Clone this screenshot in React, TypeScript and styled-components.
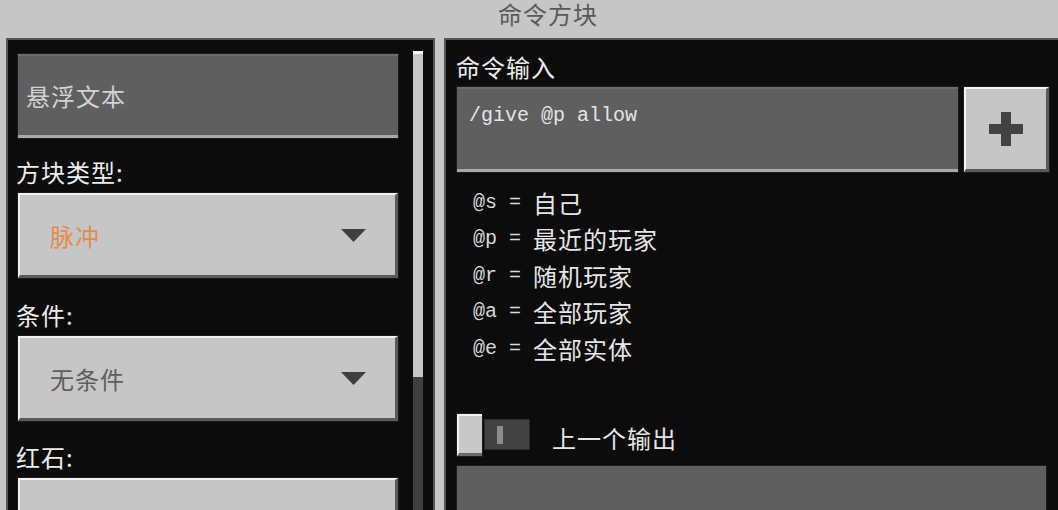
import { createGlobalStyle, styled } from "styled-components";

const GlobalStyle = createGlobalStyle`
  html, body {
    margin: 0;
    padding: 0;
    background: #c6c6c6;
  }
  body {
    font-family: "Noto Sans CJK SC", "Noto Sans", sans-serif;
  }
`;

const Screen = styled.div`
  width: 1058px;
  height: 510px;
  overflow: hidden;
  background: #c6c6c6;
  display: flex;
  flex-direction: column;
`;

const TitleBar = styled.div`
  height: 38px;
  flex: none;
  display: flex;
  justify-content: center;
  padding: 1px 0 0 38px;
  box-sizing: border-box;
`;

const Title = styled.div`
  font-size: 24px;
  line-height: 26px;
  letter-spacing: 1px;
  color: #595959;
`;

const Body = styled.div`
  flex: 1;
  display: flex;
  gap: 9px;
  padding-left: 6px;
  min-height: 0;
`;

const Panel = styled.div`
  background: #0c0c0c;
  border: 2px solid #565656;
  box-sizing: border-box;
  height: 540px;
  flex: none;
`;

const LeftPanel = styled(Panel)`
  width: 429px;
  display: flex;
  padding: 0 10px;
`;

const RightPanel = styled(Panel)`
  flex: 1;
  display: flex;
  flex-direction: column;
  padding: 15px 9px 0 10px;
`;

const Column = styled.div`
  width: 380px;
  margin-top: 14px;
  display: flex;
  flex-direction: column;

  & > * {
    flex-shrink: 0;
  }
`;

const Label = styled.div<{ $h: number }>`
  height: ${(p) => p.$h}px;
  display: flex;
  align-items: flex-end;
  padding-bottom: 9px;
  box-sizing: border-box;
  margin-left: -2px;
  font-size: 24px;
  line-height: 24px;
  letter-spacing: 1px;
  color: #ececec;
`;

const PanelHeading = styled.div`
  font-size: 24px;
  line-height: 24px;
  letter-spacing: 1px;
  color: #ececec;
`;

const TextField = styled.div<{ $h: number }>`
  height: ${(p) => p.$h}px;
  box-sizing: border-box;
  background: #5f5f5f;
  border-top: 2px solid #6c6c6c;
  border-bottom: 3px solid #a9a9a9;
  box-shadow: 0 0 0 1px #1c1c1c;
`;

const HoverField = styled(TextField)`
  display: flex;
  align-items: center;
  padding-left: 8px;
  font-size: 24px;
  letter-spacing: 1px;
  color: #d2d2d2;
`;

const Dropdown = styled.div`
  height: 85px;
  box-sizing: border-box;
  background: #c6c6c6;
  border-top: 2px solid #f2f2f2;
  border-left: 2px solid #f2f2f2;
  border-right: 3px solid #5a5a5a;
  border-bottom: 3px solid #5a5a5a;
  box-shadow: 0 0 0 1px #1c1c1c;
  display: flex;
  align-items: center;
  justify-content: space-between;
  padding: 1px 29px 0 30px;
`;

const DropdownText = styled.span<{ $accent?: boolean }>`
  font-size: 24px;
  letter-spacing: 1px;
  color: ${(p) => (p.$accent ? "#e8894a" : "#5e5e5e")};
`;

const Scrollbar = styled.div`
  width: 10px;
  margin: 11px 0 0 15px;
  background: #3f3f3f;
  display: flex;
  flex-direction: column;
`;

const Thumb = styled.div`
  height: 326px;
  flex: none;
  background: #c6c6c6;
  border-top: 3px solid #f6f6f6;
  box-sizing: border-box;
`;

const CommandRow = styled.div`
  display: flex;
  gap: 6px;
  margin-top: 8px;
  flex: none;
`;

const CommandField = styled(TextField)`
  width: 501px;
  margin-left: 1px;
  padding: 16px 12px;
  font-family: "Liberation Mono", "DejaVu Sans Mono", monospace;
  font-size: 20px;
  line-height: 22px;
  color: #e4e4e4;
`;

const PlusButton = styled.div`
  width: 85px;
  height: 85px;
  box-sizing: border-box;
  background: #c6c6c6;
  border-top: 2px solid #f4f4f4;
  border-left: 2px solid #f4f4f4;
  border-right: 3px solid #5a5a5a;
  border-bottom: 3px solid #5a5a5a;
  box-shadow: 0 0 0 1px #1c1c1c;
  display: flex;
  align-items: center;
  justify-content: center;
`;

const SelectorList = styled.div`
  margin-top: 12px;
  padding-left: 17px;
  display: flex;
  flex-direction: column;
  flex: none;
`;

const SelectorLine = styled.div`
  height: 36.5px;
  display: flex;
  align-items: center;
  color: #e6e6e6;
`;

const Code = styled.span`
  font-family: "Liberation Mono", "DejaVu Sans Mono", monospace;
  font-size: 20px;
  white-space: pre;
  color: #dadada;
`;

const Meaning = styled.span`
  font-size: 24px;
  letter-spacing: 1px;
`;

const ToggleRow = styled.div`
  margin-top: 47px;
  height: 42px;
  flex: none;
  display: flex;
  align-items: center;
  margin-left: 1px;
`;

const Knob = styled.div`
  width: 25px;
  height: 42px;
  box-sizing: border-box;
  background: #c8c8c8;
  border-top: 2px solid #f4f4f4;
  border-left: 2px solid #f4f4f4;
  border-bottom: 3px solid #6a6a6a;
  box-shadow: 0 0 0 1px #1c1c1c;
`;

const Track = styled.div`
  width: 46px;
  height: 31px;
  margin-left: 2px;
  box-sizing: border-box;
  background: #424242;
  border: 1px solid #2a2a2a;
  display: flex;
  align-items: center;
  padding-left: 12px;
`;

const TrackMark = styled.div`
  width: 6px;
  height: 18px;
  background: #8c8c8c;
`;

const ToggleText = styled.span`
  margin: 6px 0 0 22px;
  font-size: 24px;
  letter-spacing: 1px;
  color: #e6e6e6;
`;

const OutputField = styled.div`
  margin: 10px 3px 0 1px;
  flex: 1;
  background: #5f5f5f;
  box-shadow: 0 0 0 1px #1c1c1c;
`;

function Arrow() {
  return (
    <svg width="25" height="13" viewBox="0 0 25 13">
      <polygon points="0,0 25,0 12.5,13" fill="#3f3f3f" />
    </svg>
  );
}

function Plus() {
  return (
    <svg width="34" height="34" viewBox="0 0 34 34">
      <rect x="12" y="0" width="10" height="34" fill="#424242" />
      <rect x="0" y="12" width="34" height="10" fill="#424242" />
    </svg>
  );
}

const selectors = [
  { code: "@s", text: "自己" },
  { code: "@p", text: "最近的玩家" },
  { code: "@r", text: "随机玩家" },
  { code: "@a", text: "全部玩家" },
  { code: "@e", text: "全部实体" },
];

export default function App() {
  return (
    <>
      <GlobalStyle />
      <Screen>
        <TitleBar>
          <Title>命令方块</Title>
        </TitleBar>
        <Body>
          <LeftPanel>
            <Column>
              <HoverField $h={84}>悬浮文本</HoverField>
              <Label $h={55}>方块类型:</Label>
              <Dropdown>
                <DropdownText $accent>脉冲</DropdownText>
                <Arrow />
              </Dropdown>
              <Label $h={58}>条件:</Label>
              <Dropdown>
                <DropdownText>无条件</DropdownText>
                <Arrow />
              </Dropdown>
              <Label $h={57}>红石:</Label>
              <Dropdown>
                <DropdownText>需要红石</DropdownText>
                <Arrow />
              </Dropdown>
            </Column>
            <Scrollbar>
              <Thumb />
            </Scrollbar>
          </LeftPanel>
          <RightPanel>
            <PanelHeading>命令输入</PanelHeading>
            <CommandRow>
              <CommandField $h={85}>/give @p allow</CommandField>
              <PlusButton>
                <Plus />
              </PlusButton>
            </CommandRow>
            <SelectorList>
              {selectors.map((s) => (
                <SelectorLine key={s.code}>
                  <Code>{s.code} = </Code>
                  <Meaning>{s.text}</Meaning>
                </SelectorLine>
              ))}
            </SelectorList>
            <ToggleRow>
              <Knob />
              <Track>
                <TrackMark />
              </Track>
              <ToggleText>上一个输出</ToggleText>
            </ToggleRow>
            <OutputField />
          </RightPanel>
        </Body>
      </Screen>
    </>
  );
}
